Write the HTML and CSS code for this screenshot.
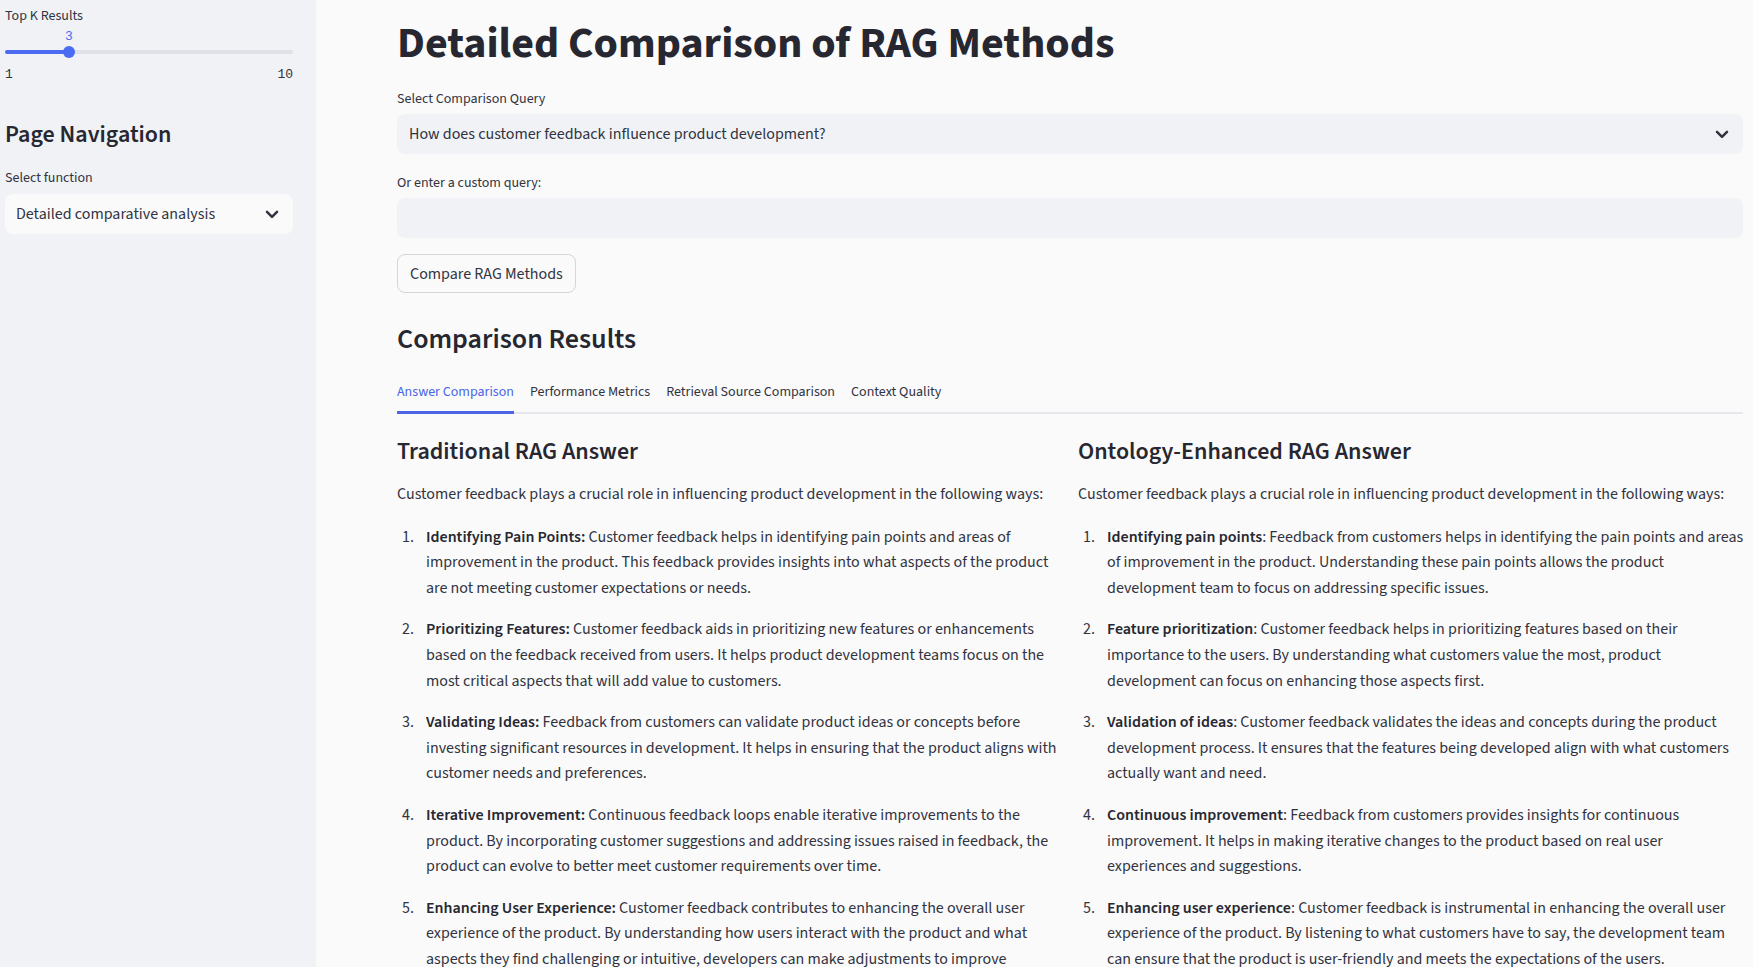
FILE: index.html
```html
<!DOCTYPE html>
<html lang="en">
<head>
<meta charset="utf-8">
<title>Detailed Comparison of RAG Methods</title>
<link rel="stylesheet" href="styles.css">
</head>
<body>
<div class="app">
  <aside class="sidebar">
    <div class="label">Top K Results</div>
    <div class="slider">
      <div class="slider-value-row"><span class="slider-value" style="left: 22.2%">3</span></div>
      <div class="track">
        <div class="fill" style="width: 22.2%"></div>
        <div class="thumb" style="left: 22.2%"></div>
      </div>
      <div class="ticks"><span>1</span><span>10</span></div>
    </div>
    <h2 class="side-title">Page Navigation</h2>
    <div class="label">Select function</div>
    <div class="select select-side">
      <span>Detailed comparative analysis</span>
      <svg class="chev" viewBox="0 0 24 24" width="20" height="20"><polyline points="6,9.5 12,15.5 18,9.5"/></svg>
    </div>
  </aside>
  <main class="main">
    <h1 class="title">Detailed Comparison of RAG Methods</h1>
    <div class="label">Select Comparison Query</div>
    <div class="select select-main">
      <span>How does customer feedback influence product development?</span>
      <svg class="chev" viewBox="0 0 24 24" width="20" height="20"><polyline points="6,9.5 12,15.5 18,9.5"/></svg>
    </div>
    <div class="label label-gap">Or enter a custom query:</div>
    <div class="input"></div>
    <div class="btn-row"><button class="btn">Compare RAG Methods</button></div>
    <h3 class="section-title">Comparison Results</h3>
    <div class="tabs">
      <div class="tab active">Answer Comparison</div>
      <div class="tab">Performance Metrics</div>
      <div class="tab">Retrieval Source Comparison</div>
      <div class="tab">Context Quality</div>
    </div>
    <div class="columns">
      <section class="col">
        <h4 class="col-title">Traditional RAG Answer</h4>
        <p class="intro">Customer feedback plays a crucial role in influencing product development in the following ways:</p>
        <ol class="answers">
          <li><span class="li-text"><b>Identifying Pain Points:</b> Customer feedback helps in identifying pain points and areas of<br>improvement in the product. This feedback provides insights into what aspects of the product<br>are not meeting customer expectations or needs.</span></li>
          <li><span class="li-text"><b>Prioritizing Features:</b> Customer feedback aids in prioritizing new features or enhancements<br>based on the feedback received from users. It helps product development teams focus on the<br>most critical aspects that will add value to customers.</span></li>
          <li><span class="li-text"><b>Validating Ideas:</b> Feedback from customers can validate product ideas or concepts before<br>investing significant resources in development. It helps in ensuring that the product aligns with<br>customer needs and preferences.</span></li>
          <li><span class="li-text"><b>Iterative Improvement:</b> Continuous feedback loops enable iterative improvements to the<br>product. By incorporating customer suggestions and addressing issues raised in feedback, the<br>product can evolve to better meet customer requirements over time.</span></li>
          <li><span class="li-text"><b>Enhancing User Experience:</b> Customer feedback contributes to enhancing the overall user<br>experience of the product. By understanding how users interact with the product and what<br>aspects they find challenging or intuitive, developers can make adjustments to improve<br>usability and satisfaction.</span></li>
        </ol>
      </section>
      <section class="col">
        <h4 class="col-title">Ontology-Enhanced RAG Answer</h4>
        <p class="intro">Customer feedback plays a crucial role in influencing product development in the following ways:</p>
        <ol class="answers">
          <li><span class="li-text"><b>Identifying pain points</b>: Feedback from customers helps in identifying the pain points and areas<br>of improvement in the product. Understanding these pain points allows the product<br>development team to focus on addressing specific issues.</span></li>
          <li><span class="li-text"><b>Feature prioritization</b>: Customer feedback helps in prioritizing features based on their<br>importance to the users. By understanding what customers value the most, product<br>development can focus on enhancing those aspects first.</span></li>
          <li><span class="li-text"><b>Validation of ideas</b>: Customer feedback validates the ideas and concepts during the product<br>development process. It ensures that the features being developed align with what customers<br>actually want and need.</span></li>
          <li><span class="li-text"><b>Continuous improvement</b>: Feedback from customers provides insights for continuous<br>improvement. It helps in making iterative changes to the product based on real user<br>experiences and suggestions.</span></li>
          <li><span class="li-text"><b>Enhancing user experience</b>: Customer feedback is instrumental in enhancing the overall user<br>experience of the product. By listening to what customers have to say, the development team<br>can ensure that the product is user-friendly and meets the expectations of the users.</span></li>
        </ol>
      </section>
    </div>
  </main>
</div>
</body>
</html>
```
FILE: styles.css
```css
*, *::before, *::after { box-sizing: border-box; }
html, body { margin: 0; padding: 0; }
body {
  font-family: "Source Sans 3", "Source Sans Pro", "Noto Sans CJK SC", sans-serif;
  color: #31333f;
  background: #fafafa;
  overflow: hidden;
}
.app { display: flex; height: 967px; }

/* Sidebar */
.sidebar {
  width: 316px;
  flex: none;
  background: #f0f2f6;
  padding: 6px 23px 0 5px;
}
.label { font-size: 14px; line-height: 21px; color: #31333f; }
.slider { position: relative; }
.slider-value-row { position: relative; height: 17px; }
.slider-value {
  position: absolute; top: 3px; transform: translateX(-50%);
  font-family: "Liberation Mono", "DejaVu Sans Mono", monospace; font-size: 13px; line-height: 14px;
  color: #4b6cf0;
}
.track { position: relative; height: 4px; border-radius: 2px; background: #dfe1e7; margin-top: 6px; }
.fill { height: 4px; border-radius: 2px; background: #4b6cf0; }
.thumb {
  position: absolute; top: -4px; width: 12px; height: 12px; margin-left: -6px;
  border-radius: 50%; background: #4b6cf0;
}
.ticks {
  display: flex; justify-content: space-between; margin-top: 14px;
  font-family: "Liberation Mono", "DejaVu Sans Mono", monospace; font-size: 13px; line-height: 14px; color: #31333f;
}
.side-title { font-size: 24px; font-weight: 600; line-height: 30px; margin: 38px 0 18px; color: #262730; }
.select {
  display: flex; align-items: center; justify-content: space-between;
  height: 40px; border-radius: 8px; padding: 0 11px 0 12px; font-size: 16px; margin-top: 5px;
}
.select-side { background: #fafafa; padding-left: 11px; }
.select-main { background: #f0f2f6; margin-top: 4px; }
.chev { fill: none; stroke: #31333f; stroke-width: 3; stroke-linecap: round; stroke-linejoin: round; }

/* Main */
.main { flex: 1; padding: 17px 10px 0 81px; min-width: 0; }
.title { font-size: 44px; font-weight: 700; line-height: 53px; margin: 0 0 19px; color: #262730; }
.label-gap { margin-top: 19px; }
.input { height: 40px; border-radius: 8px; background: #f0f2f6; margin-top: 4px; }
.btn-row { margin-top: 16px; }
.btn {
  font-family: inherit; font-size: 16px; color: #31333f; background: #fafafa;
  border: 1px solid #d5d6da; border-radius: 8px; height: 39px; padding: 0 12px;
}
.section-title { font-size: 28px; font-weight: 600; line-height: 34px; margin: 29px 0 15px; color: #262730; }
.tabs { display: flex; gap: 16px; box-shadow: inset 0 -2px 0 #e6e7ea; }
.tab { font-size: 14px; line-height: 21px; padding: 11px 0 8px; border-bottom: 3px solid transparent; color: #31333f; }
.tab.active { color: #4a66e6; border-bottom-color: #4a66e6; }

.columns { display: grid; grid-template-columns: 1fr 1fr; gap: 16px; margin-top: 23px; }
.col { min-width: 0; }
.col-title { font-size: 24px; font-weight: 600; line-height: 29px; margin: 0 0 16px; color: #262730; }
.intro { font-size: 16px; line-height: 25.6px; margin: 0 0 17px; white-space: nowrap; }
.answers {
  margin: 0; padding: 0; list-style: none; counter-reset: item;
  font-size: 16px; line-height: 25.6px; white-space: nowrap;
}
.answers li { display: flex; counter-increment: item; margin-bottom: 16px; }
.answers li::before { content: counter(item) "."; flex: none; width: 29px; padding-left: 5px; }
.answers b { font-weight: 600; color: #262730; }
```
